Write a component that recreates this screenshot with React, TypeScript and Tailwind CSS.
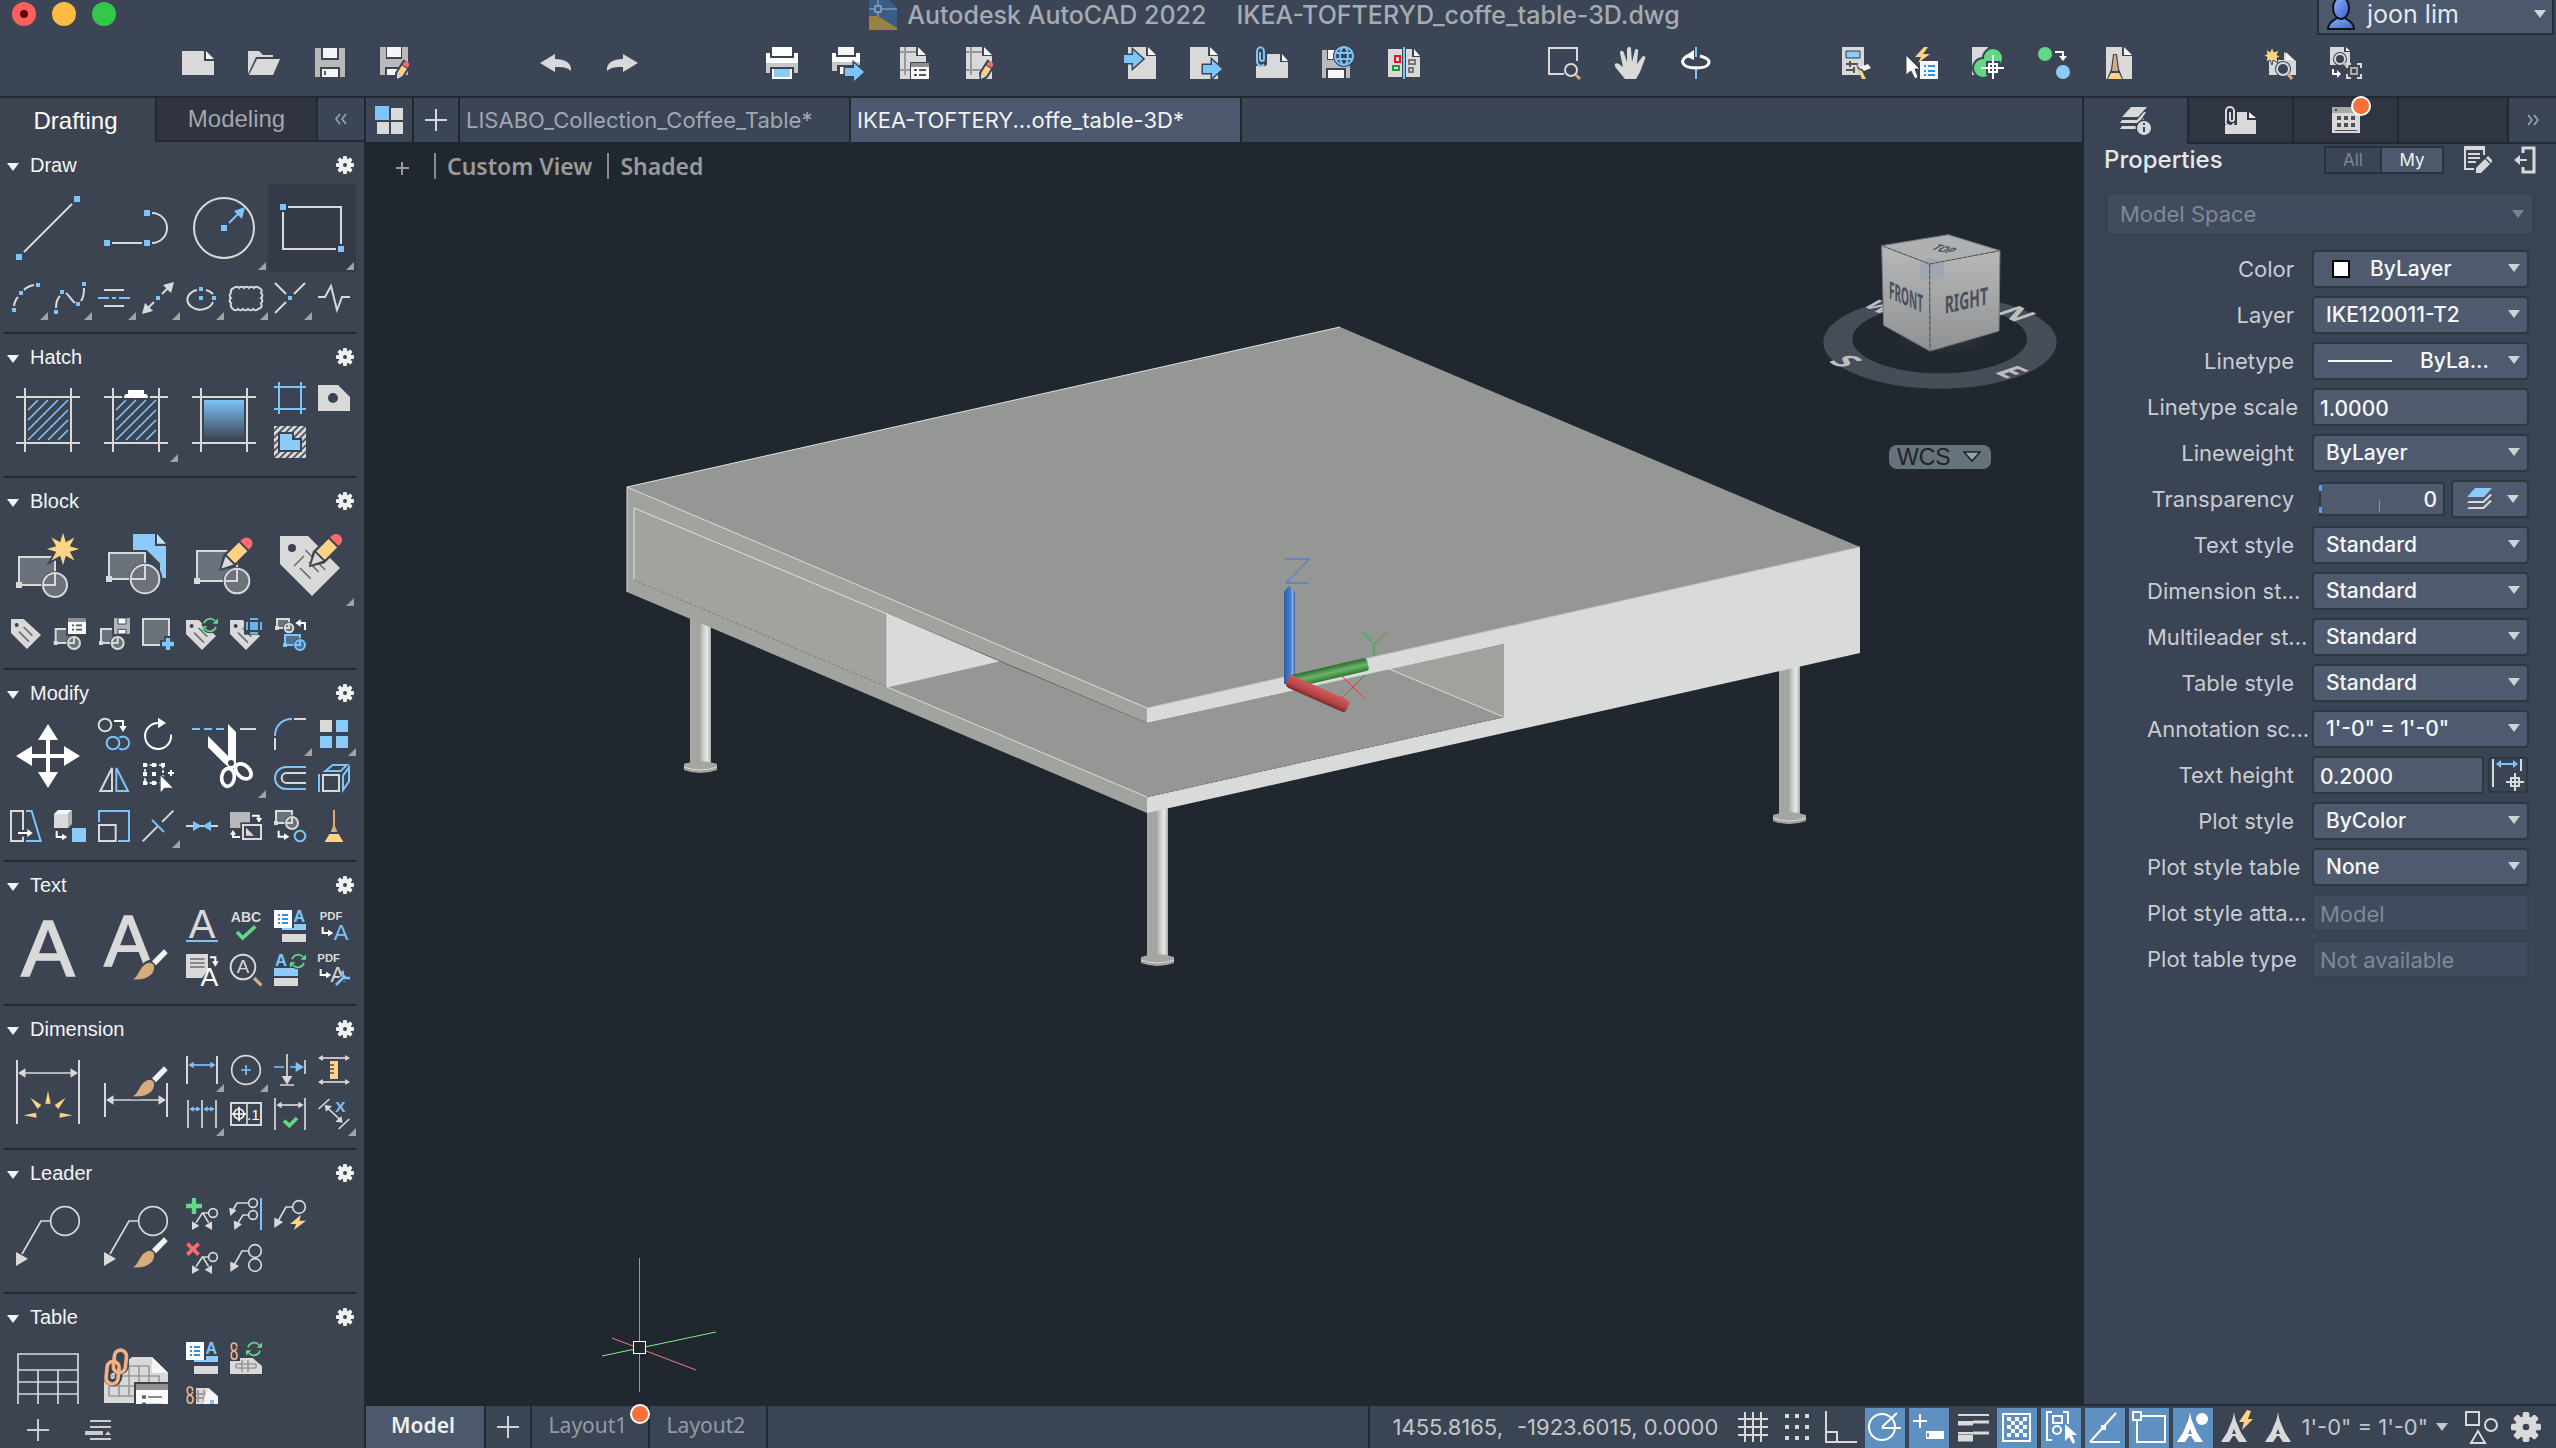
import React, { ReactNode } from "react";

const W = "#d9d9d9";
const B = "#7cc4fa";
const BF = "#8ccbf8";
const G = "#62d884";
const Y = "#fed384";
const R = "#fb6a6e";
const T = "#d9ab7c";
const P = "#3c4452";
const F = "#6c727c";
const O = "#f0b183";
const sans = "font-['Liberation_Sans',Arial,sans-serif]";

/* ---------- shared glyph parts ---------- */

function Gear({ className }: { className: string }) {
  return (
    <svg viewBox="-9 -9 18 18" className={className} aria-hidden="true">
      <g fill="currentColor">
        {[0, 45, 90, 135].map((a) => (
          <rect key={a} x="-2" y="-9" width="4" height="18" rx="1" transform={`rotate(${a})`} />
        ))}
      </g>
      <circle r="4.3" fill="none" stroke="currentColor" strokeWidth="4.4" />
      <circle r="2" fill={P} />
    </svg>
  );
}

function Caret({ className }: { className: string }) {
  return (
    <svg viewBox="0 0 12 8" className={className} aria-hidden="true">
      <path d="M0 0H12L6 8z" fill="currentColor" />
    </svg>
  );
}

function Svg({ box, children }: { box: string; children: ReactNode }) {
  return (
    <svg viewBox={box} className="block h-full w-full overflow-visible" fill="none" stroke={W} strokeWidth="6" aria-hidden="true">
      {children}
    </svg>
  );
}

function Glyph({ x, y, s, c = W, bold, children }: { x: number; y: number; s: number; c?: string; bold?: boolean; children: string }) {
  return (
    <text x={x} y={y} fontSize={s} fill={c} stroke="none" fontWeight={bold ? 700 : 400} fontFamily="Liberation Sans, Arial, sans-serif" textAnchor="middle">
      {children}
    </text>
  );
}

function Pencil({ x, y, k = 1 }: { x: number; y: number; k?: number }) {
  return (
    <g transform={`translate(${x} ${y}) rotate(-45) scale(${k})`} stroke="none">
      <path d="M-8 0L34 -25H112A25 25 0 0 1 112 25H34z" fill={P} />
      <path d="M2 0L36 -17V17z" fill={W} />
      <rect x="42" y="-18" width="52" height="36" fill={Y} />
      <path d="M100 -18H108A18 18 0 0 1 108 18H100z" fill={R} />
    </g>
  );
}

function Brush({ x, y }: { x: number; y: number }) {
  return (
    <g transform={`translate(${x} ${y})`} stroke="none">
      <path d="M-8 8C12 -4 18 -56 58 -60L92 -100L116 -80L72 -32C70 0 40 12 -8 8z" fill={P} />
      <path d="M0 0C22 -10 20 -46 52 -50Q66 -48 64 -32C60 -6 30 2 0 0z" fill={T} />
      <path d="M58 -54L94 -90L105 -78L70 -42z" fill="#f2f2f2" />
    </g>
  );
}

function BlockMark({ x, y, w, h, r, c = W, f = F }: { x: number; y: number; w: number; h: number; r: number; c?: string; f?: string }) {
  return (
    <g stroke={c}>
      <rect x={x} y={y} width={w} height={h} fill={f} />
      <circle cx={x + w} cy={y + h} r={r + 5} fill={P} stroke="none" />
      <circle cx={x + w} cy={y + h} r={r} fill={f} />
      <path d={`M${x + w - r} ${y + h}H${x + w}V${y + h - r}`} />
      <rect x={x - 6} y={y + h - 6} width="12" height="12" fill={c} stroke="none" />
    </g>
  );
}

function Refresh({ x, y }: { x: number; y: number }) {
  return (
    <g transform={`translate(${x} ${y})`}>
      <circle r="25" fill={P} stroke="none" />
      <path d="M-18 -5A19 19 0 0 1 15 -12M18 5A19 19 0 0 1 -15 12" stroke={G} strokeWidth="5" />
      <path d="M24 -20V-4H8zM-24 20V4H-8z" fill={G} stroke="none" />
    </g>
  );
}

function Turn({ x, y }: { x: number; y: number }) {
  return (
    <g transform={`translate(${x} ${y})`}>
      <path d="M2 0V18H20" stroke="#fff" />
      <path d="M18 8L34 18L18 28z" fill="#fff" stroke="none" />
    </g>
  );
}

function Drop({ x, y }: { x: number; y: number }) {
  return (
    <g transform={`translate(${x} ${y})`}>
      <path d="M0 0H16V16" stroke="#fff" />
      <path d="M6 12H26L16 28z" fill="#fff" stroke="none" />
    </g>
  );
}

function StyleSheetIcon() {
  return (
    <g stroke="none">
      <path d="M42 66h72v12H42z" fill={BF} />
      <path d="M78 60h36v18H78z" fill={BF} />
      <path d="M42 90h72v24H42z" fill={W} />
      <path d="M14 14h64v58H14z" fill={P} />
      <path d="M18 18h54v54H18z" fill="#fff" />
      <path d="M30 33h6M30 45h6M30 57h6M42 33h18M42 45h18M42 57h18" stroke="#2f8fe0" strokeWidth="6" />
      <Glyph x={94} y={53} s={48} c={B} bold>A</Glyph>
    </g>
  );
}

const tagPath = "M0 0H38L90 48L48 90L0 42z";
function MiniTag({ x, y }: { x: number; y: number }) {
  return (
    <g transform={`translate(${x} ${y})`}>
      <path d={tagPath} fill={W} stroke="none" />
      <circle cx="17" cy="18" r="6" fill={P} stroke="none" />
      <path d="M38 24L64 50M24 38L54 68" stroke="#6e6e6e" strokeWidth="5" />
    </g>
  );
}

/* ---------- left palette ---------- */

type ToolDef = { n: string; box: string; g: ReactNode; fly?: boolean; on?: boolean };

function Tool({ t, big }: { t: ToolDef; big?: boolean }) {
  return (
    <button
      type="button"
      aria-label={t.n}
      title={t.n}
      className={`relative block shrink-0 ${big ? "h-22 w-22" : "h-11 w-11"} ${t.on ? "bg-[#343a48]" : ""}`}
    >
      <Svg box={t.box}>{t.g}</Svg>
      {t.fly && (
        <svg viewBox="0 0 8 8" aria-hidden="true" className={`absolute h-2 w-2 ${big ? "right-0.5 bottom-0.5" : "right-0 bottom-0"}`}>
          <path d="M8 0V8H0z" fill="#a3a3a3" />
        </svg>
      )}
    </button>
  );
}

function Section({ title, children, row }: { title: string; children: ReactNode; row?: ToolDef[] }) {
  return (
    <section className="border-b-2 border-[#232931] pb-3">
      <div className="flex h-[42px] items-center justify-between pt-1 pr-0.5">
        <button type="button" className={`flex items-center gap-2 text-[20px] leading-6 text-[#f4f4f4] ${sans}`}>
          <Caret className="mt-1 h-2 w-[18px]" />
          <span>{title}</span>
        </button>
        <button type="button" aria-label={`${title} settings`} className="text-[#f2f2f2]">
          <Gear className="h-[18px] w-[18px]" />
        </button>
      </div>
      <div className="flex">{children}</div>
      {row && <div className="mt-1 flex">{row.map((t) => <Tool key={t.n} t={t} />)}</div>}
    </section>
  );
}

const quadCols = { 2: "grid-cols-2", 3: "grid-cols-3", 4: "grid-cols-4" };
function Quad({ tools, cols = 2 }: { tools: ToolDef[]; cols?: 2 | 3 | 4 }) {
  return (
    <div className={`grid content-start ${quadCols[cols]}`}>
      {tools.map((t) => <Tool key={t.n} t={t} />)}
    </div>
  );
}

const Sq = ({ x, y, s = 6 }: { x: number; y: number; s?: number }) => (
  <rect x={x - s / 2} y={y - s / 2} width={s} height={s} fill={B} stroke="none" />
);
const L2 = ({ d, c = W }: { d: string; c?: string }) => <path d={d} stroke={c} strokeWidth="2" />;

const drawBig: ToolDef[] = [
  { n: "Line", box: "4 184 88 88", g: <><L2 d="M24 252L72 204" /><Sq x={19} y={257} /><Sq x={77} y={199} /></> },
  { n: "Polyline", box: "92 184 88 88", g: <><L2 d="M112 243H142M152 213A15 15 0 0 1 152 243" /><Sq x={107} y={243} /><Sq x={147} y={243} /><Sq x={147} y={213} /></> },
  { n: "Circle", box: "180 184 88 88", fly: true, g: <><circle cx="224" cy="228" r="30" strokeWidth="2" /><L2 c={B} d="M229 223L239 213" /><path d="M245 207L242 219L234 211z" fill={B} stroke="none" /><Sq x={224} y={228} /></> },
  { n: "Rectangle", box: "268 184 88 88", fly: true, on: true, g: <><L2 d="M288 207H341V244M336 249H283V212" /><Sq x={283} y={207} /><Sq x={341} y={249} /></> },
];
const drawRow: ToolDef[] = [
  { n: "Arc", box: "4 276 44 44", fly: true, g: <><L2 d="M14 306Q15 300 18 297M24 290Q28 286 34 285" /><Sq x={14} y={310} s={4} /><Sq x={21} y={293} s={4} /><Sq x={38} y={285} s={4} /></> },
  { n: "Spline", box: "48 276 44 44", fly: true, g: <><L2 d="M56 308C56 303 58 298 60 296M66 293C69 295 71 300 75 303M81 301C84 297 84 292 84 288" /><Sq x={56} y={312} s={4} /><Sq x={62} y={292} s={4} /><Sq x={78} y={304} s={4} /><Sq x={84} y={284} s={4} /></> },
  { n: "Construction line", box: "92 276 44 44", fly: true, g: <><L2 d="M104 290H124M104 306H124" /><L2 c={B} d="M98 298H109M112 298H116M119 298H130" /></> },
  { n: "Ray", box: "136 276 44 44", fly: true, g: <><L2 d="M162 294L168 288M154 302L148 308" /><path d="M174 282L171 293L163 285zM142 314L145 303L153 311z" fill={W} stroke="none" /><Sq x={158} y={298} s={4} /></> },
  { n: "Ellipse", box: "180 276 44 44", fly: true, g: <><L2 d="M206 290A13 10 0 0 1 213 294M213 302A13 10 0 1 1 197 290" /><Sq x={201} y={289} s={4} /><Sq x={201} y={298} s={4} /><Sq x={214} y={298} s={4} /></> },
  { n: "Revision cloud", box: "224 276 44 44", fly: true, g: <L2 d="M234 288a3 3 0 0 1 5 0a3 3 0 0 1 5 0a3 3 0 0 1 5 0a3 3 0 0 1 5 0a3 3 0 0 1 5 0q4 1 2 5a3 3 0 0 1 0 5a3 3 0 0 1 0 5q2 5 -3 6a3 3 0 0 1 -5 0a3 3 0 0 1 -5 0a3 3 0 0 1 -5 0a3 3 0 0 1 -5 0a3 3 0 0 1 -5 0q-3 -2 -2 -6a3 3 0 0 1 0 -5a3 3 0 0 1 0 -5q-1 -4 3 -5" /> },
  { n: "Point", box: "268 276 44 44", fly: true, g: <><L2 d="M275 283L286 294M305 283L294 294M286 302L275 313" /><Sq x={290} y={298} s={4} /></> },
  { n: "Break line", box: "312 276 44 44", g: <L2 d="M318 297H325L331 286L337 310L342 297H350" /> },
];

const frame = (dx: number) => <path d={`M${75 + dx} 174V366M${213 + dx} 174V366M${48 + dx} 339H${240 + dx}`} />;
const diag = (dx: number) => (
  <path
    d={[324, 354, 384, 414, 444, 474, 504]
      .map((c) => {
        const x1 = Math.max(84, c - 330), x2 = Math.min(204, c - 210);
        return `M${x1 + dx} ${c - x1}L${x2 + dx} ${c - x2}`;
      })
      .join("")}
    stroke={B}
    strokeWidth="5"
  />
);
const hatchBig: ToolDef[] = [
  { n: "Hatch", box: "12 138 264 264", g: <>{frame(0)}<path d="M48 201H240" />{diag(0)}</> },
  { n: "Boundary", box: "276 138 264 264", fly: true, g: <>{frame(264)}<path d="M312 201H366M450 201H504" />{diag(264)}<path d="M384 180H432V192H438Q444 194 444 204H372Q372 194 378 192H384z" fill="#fff" stroke="none" /></> },
  {
    n: "Gradient", box: "540 138 264 264",
    g: <><defs><linearGradient id="gr" x1="0" y1="0" x2="0" y2="1"><stop offset="0" stopColor={B} /><stop offset="1" stopColor={P} /></linearGradient></defs>{frame(528)}<path d="M576 201H768" /><rect x="612" y="210" width="120" height="120" fill="url(#gr)" stroke="none" /></>,
  },
];
const hatchSmall: ToolDef[] = [
  { n: "Hatch boundary", box: "804 138 132 132", g: <path stroke={B} d="M837 156V252M903 156V252M822 171H918M822 237H918" /> },
  { n: "Wipeout", box: "936 138 132 132", g: <><path d="M954 165H1014L1050 201V243H954z" fill={W} stroke="none" /><circle cx="999" cy="204" r="15" fill={P} stroke="none" /></> },
  {
    n: "Region", box: "804 270 132 132",
    g: <><defs><pattern id="hp" width="14" height="14" patternUnits="userSpaceOnUse" patternTransform="rotate(45)"><rect width="6" height="14" fill={W} /></pattern></defs>
      <rect x="822" y="288" width="96" height="96" fill="url(#hp)" stroke="none" /><path d="M834 306H882V324H906V366H834z" fill={P} stroke="none" /><path d="M840 312H876V330H900V360H840z" fill={BF} stroke="none" /></>,
  },
];

const star = Array.from({ length: 16 }, (_, i) => {
  const r = i % 2 ? 22 : 49, a = (i * Math.PI) / 8;
  return `${189 + r * Math.sin(a)},${657 - r * Math.cos(a)}`;
}).join(" ");

const blockBig: ToolDef[] = [
  { n: "Create block", box: "12 570 264 264", g: <><BlockMark x={57} y={681} w={108} h={84} r={36} /><rect x="48" y="756" width="18" height="18" fill={W} stroke="none" /><polygon points={star} fill={Y} stroke={P} strokeWidth="12" /><polygon points={star} fill={Y} stroke="none" /></> },
  { n: "Insert block", box: "276 570 264 264", g: <><path d="M399 612H465V648H498V744H480V700L440 660H399z" fill={BF} stroke="none" /><path d="M471 612L498 641H471z" fill="#c3e4fb" stroke="none" /><rect x="321" y="660" width="120" height="84" fill={P} stroke="none" /><circle cx="435" cy="747" r="52" fill={P} stroke="none" /><BlockMark x={327} y={669} w={108} h={78} r={43} /><rect x="318" y="738" width="18" height="18" fill={W} stroke="none" /></> },
  { n: "Edit block", box: "540 570 264 264", g: <><BlockMark x={591} y={663} w={120} h={90} r={37} /><rect x="582" y="744" width="18" height="18" fill={W} stroke="none" /><Pencil x={663} y={717} /></> },
  { n: "Edit attribute", box: "804 570 264 264", fly: true, g: <><path d="M840 618H924L1020 714L936 798L840 702z" fill={W} stroke="none" /><circle cx="876" cy="654" r="12" fill={P} stroke="none" /><path d="M882 708L912 678M916 660L976 720M926 696L956 726M900 714L932 746" stroke="#6e6e6e" strokeWidth="5" /><Pencil x={932} y={706} /></> },
];
const blockRow: ToolDef[] = [
  { n: "Attribute", box: "12 846 132 132", g: <MiniTag x={33} y={867} /> },
  { n: "Block list", box: "144 846 132 132", g: <><BlockMark x={167} y={897} w={55} h={42} r={18} /><path d="M198 858H264V918H198z" fill={P} stroke="none" /><path d="M204 864H258V876H204z" fill="#8f8f8f" stroke="none" /><path d="M204 876H258V912H204z" fill="#f8f8f8" stroke="none" /><path d="M216 886H222M228 886H246M216 899H222M228 899H246" stroke="#555" strokeWidth="5" /></> },
  { n: "Write block", box: "276 846 132 132", g: <><BlockMark x={303} y={897} w={50} h={42} r={18} /><path d="M336 858H396V918H336z" fill={P} stroke="none" /><path d="M342 864H390V912H342z" fill="#b4b4b8" stroke="none" /><path d="M354 864H378V882H354zM354 898H378V912H354z" fill="#fff" stroke={P} strokeWidth="3" /></> },
  { n: "Base point", box: "408 846 132 132", g: <><rect x="429" y="867" width="78" height="78" fill={F} /><path d="M504 918V966M480 942H528" stroke={P} strokeWidth="24" /><path d="M504 924V960M486 942H522" stroke={B} strokeWidth="13" /></> },
  { n: "Sync attributes", box: "540 846 132 132", g: <><MiniTag x={558} y={870} /><Refresh x={630} y={885} /></> },
  { n: "Attribute display", box: "672 846 132 132", g: <><MiniTag x={690} y={870} /><rect x="732" y="858" width="60" height="56" fill={P} stroke="none" /><rect x="750" y="876" width="24" height="24" fill="#6db4e8" stroke="none" /><path d="M750 867H774M750 909H774M741 876V900M783 876V900" stroke="#6db4e8" /></> },
  { n: "Replace block", box: "804 846 132 132", g: <><BlockMark x={831} y={867} w={36} h={27} r={13} /><BlockMark x={855} y={915} w={45} h={30} r={15} c={B} f="#4d7294" /><path d="M915 900V879H900" stroke="#fff" /><path d="M886 879L902 868V890z" fill="#fff" stroke="none" /></> },
];

const moveTool: ToolDef = { n: "Move", box: "12 126 264 264", g: <><path d="M144 190V326M76 258H212" stroke="#fff" strokeWidth="12" /><path d="M144 162L174 210H114zM144 354L174 306H114zM48 258L96 228V288zM240 258L192 228V288z" fill="#fff" stroke="none" /></> };
const modA: ToolDef[] = [
  { n: "Copy", box: "276 126 132 132", g: <><circle cx="315" cy="165" r="19" /><path d="M342 153H369V170" stroke="#fff" /><path d="M358 168H380L369 186z" fill="#fff" stroke="none" /><circle cx="339" cy="219" r="19" stroke={B} /><path d="M358 203A19 19 0 1 1 358 235" stroke={B} /></> },
  { n: "Rotate", box: "408 126 132 132", g: <><path d="M474 159A39 39 0 1 0 513 194" stroke="#fff" /><path d="M474 143L498 159L474 175z" fill="#fff" stroke="none" /></> },
  { n: "Mirror", box: "276 258 132 132", g: <><path d="M301 363H336V294z" /><path d="M349 294V363H384z" stroke={B} /></> },
  { n: "Edit selection", box: "408 258 132 132", g: <><rect x="435" y="285" width="54" height="54" stroke="#fff" strokeDasharray="8 6" strokeWidth="5" /><path d="M429 279h12v12h-12zM456 279h12v12h-12zM483 279h12v12h-12zM429 306h12v12h-12zM456 306h12v12h-12zM429 333h12v12h-12zM456 333h12v12h-12z" fill="#fff" stroke="none" /><path d="M504 309H522M513 300V318" stroke="#fff" /><path d="M480 312V372L494 355H522z" fill="#fff" stroke={P} strokeWidth="4" /></> },
];
const trimTool: ToolDef = {
  n: "Trim", box: "540 126 264 264", fly: true,
  g: <><path d="M576 177H600M612 177H636M648 177H672" stroke={B} /><path d="M720 177H768" /><g stroke="#fff" strokeWidth="11"><ellipse cx="684" cy="322" rx="19" ry="27" transform="rotate(6 684 322)" /><ellipse cx="730" cy="304" rx="18" ry="27" transform="rotate(-48 730 304)" /></g><path d="M624 198L690 264H708V290L694 298L672 280L624 232zM684 162L708 186V280H684z" fill="#fff" stroke="none" /><circle cx="693" cy="279" r="9" fill={P} stroke="none" /></>,
};
const modB: ToolDef[] = [
  { n: "Fillet", box: "804 126 132 132", fly: true, g: <><path d="M825 198C825 168 846 147 876 147" stroke={B} /><path d="M882 147H918M825 204V240" /></> },
  { n: "Array", box: "936 126 132 132", fly: true, g: <g stroke="none" fill={BF}><path d="M960 150h36v36h-36z" fill={W} /><path d="M1008 150h36v36h-36zM960 198h36v36h-36zM1008 198h36v36h-36z" /></g> },
  { n: "Offset", box: "804 258 132 132", g: <><path d="M918 291H858A33 33 0 0 0 858 357H918" stroke={B} /><path d="M918 309H860A15 15 0 0 0 860 339H918" /></> },
  { n: "Solid edit", box: "936 258 132 132", g: <><rect x="969" y="315" width="48" height="48" /><path d="M957 312V366M976 303L998 285H1041L1022 303zM1029 317L1047 292V334L1029 360z" stroke={B} /></> },
];
const modifyRow: ToolDef[] = [
  { n: "Stretch", box: "12 402 132 132", g: <><path d="M69 480V423H33V513H69V500" /><path d="M78 423H95L122 513H78" stroke={B} /><path d="M54 489H84" stroke="#fff" /><path d="M82 477L98 489L82 501z" fill="#fff" stroke="none" /></> },
  { n: "3D move", box: "144 402 132 132", g: <><g stroke="none"><path d="M162 432L174 420H216L204 432z" fill="#f5f5f5" /><path d="M162 432H204V474H162z" fill={W} /><path d="M204 432L216 420V462L204 474z" fill="#b0b0b0" /><path d="M216 474H258V516H216z" fill={BF} /></g><Turn x={168} y={483} /></> },
  { n: "Scale", box: "276 402 132 132", g: <><path d="M297 456V423H387V513H354" stroke={B} /><rect x="297" y="465" width="50" height="48" /></> },
  { n: "Break", box: "408 402 132 132", fly: true, g: <><path d="M428 514L520 422" /><path d="M468 452L486 470" stroke={P} strokeWidth="20" /><path d="M456 450L492 486" stroke={B} /></> },
  { n: "Join", box: "540 402 132 132", g: <><path d="M558 468H654" /><path d="M579 453L605 468L579 483zM633 453L607 468L633 483z" fill={B} stroke="none" /></> },
  { n: "Draw order", box: "672 402 132 132", g: <><path d="M690 426H750V474H690z" fill="#b8b8b8" stroke="none" /><path d="M756 437H776V446" stroke="#fff" /><path d="M768 444H786L777 458z" fill="#fff" stroke="none" /><rect x="729" y="465" width="54" height="42" fill={P} stroke={P} strokeWidth="16" /><rect x="729" y="465" width="54" height="42" /><path d="M738 473L762 497H738z" fill={W} stroke="none" /><path d="M720 501H699V492" stroke="#fff" /><path d="M690 494H708L699 480z" fill="#fff" stroke="none" /></> },
  { n: "Extract", box: "804 402 132 132", g: <><BlockMark x={828} y={423} w={48} h={36} r={18} /><Turn x={834} y={482} /><circle cx="900" cy="498" r="16" stroke={B} /></> },
  { n: "Purge", box: "936 402 132 132", g: <g stroke="none"><path d="M999 420H1005V468L1012 486H992L999 468z" fill={T} /><path d="M988 492H1016L1030 516H974z" fill={Y} /></g> },
];

const Check = ({ d }: { d: string }) => <path d={d} stroke={G} strokeWidth="11" />;
const textBig: ToolDef[] = [
  { n: "Multiline text", box: "12 702 264 264", g: <text x="144" y="918" fontSize="240" fill={W} stroke={W} strokeWidth="5" textAnchor="middle" fontFamily="Liberation Sans, Arial, sans-serif">A</text> },
  { n: "Text style", box: "276 702 264 264", g: <><text x="384" y="888" fontSize="214" fill={W} stroke={W} strokeWidth="5" textAnchor="middle" fontFamily="Liberation Sans, Arial, sans-serif">A</text><Brush x={398} y={928} /></> },
];
const textSmall: ToolDef[] = [
  { n: "Single line text", box: "540 702 132 132", g: <><Glyph x={606} y={804} s={120}>A</Glyph><path d="M558 813H654" stroke={B} /></> },
  { n: "Spelling", box: "672 702 132 132", g: <><Glyph x={738} y={756} s={42} bold>ABC</Glyph><Check d="M711 786L728 804L766 769" /></> },
  { n: "Annotation style", box: "804 702 132 132", g: <g transform="translate(804 702)"><StyleSheetIcon /></g> },
  { n: "PDF text", box: "936 702 132 132", g: <><Glyph x={993} y={750} s={34} bold>PDF</Glyph><Turn x={966} y={771} /><Glyph x={1023} y={810} s={66} c={B}>A</Glyph></> },
  { n: "Text from list", box: "540 834 132 132", g: <><path d="M558 852H624V900L606 924H558z" fill={W} stroke="none" /><path d="M570 867H614M570 879H614M570 891H614" stroke="#6e6e6e" strokeWidth="5" /><Drop x={630} y={862} /><Glyph x={628} y={948} s={80} c="#fff">A</Glyph></> },
  { n: "Find text", box: "672 834 132 132", g: <><circle cx="729" cy="891" r="37" /><Glyph x={729} y={908} s={56}>A</Glyph><path d="M762 924L784 946" stroke={T} strokeWidth="10" /></> },
  { n: "Update text", box: "804 834 132 132", g: <><Glyph x={843} y={888} s={50} c={B} bold>A</Glyph><path d="M822 894H894V918H822z" fill={BF} stroke="none" /><path d="M822 924H894V948H822z" fill={W} stroke="none" /><Refresh x={894} y={873} /></> },
  { n: "PDF settings", box: "936 834 132 132", g: <><Glyph x={986} y={876} s={34} bold>PDF</Glyph><Turn x={960} y={897} /><Glyph x={1013} y={936} s={64}>A</Glyph><path d="M1008 945L1036 917" stroke={P} strokeWidth="18" /><path d="M1008 945L1036 917" stroke={B} strokeWidth="8" /><path d="M1028 902V918L1034 924H1050" stroke={B} strokeWidth="8" /></> },
];

const arrowsH = (x1: number, x2: number, y: number, c = W, h = 10) => (
  <g>
    <path d={`M${x1 + h} ${y}H${x2 - h}`} stroke={c} strokeWidth="5" />
    <path d={`M${x1} ${y}L${x1 + h * 1.6} ${y - h}V${y + h}zM${x2} ${y}L${x2 - h * 1.6} ${y - h}V${y + h}z`} fill={c} stroke="none" />
  </g>
);
const dimBig: ToolDef[] = [
  { n: "Dimension", box: "12 144 264 264", g: <><path d="M51 180V372M237 180V372" />{arrowsH(54, 234, 219, W, 14)}<path d="M144 272L152 311H136zM91 293L124 315L113 327zM197 293L164 315L175 327zM71 346L108 338L110 353zM217 346L180 338L178 353z" fill={Y} stroke="none" /></> },
  { n: "Dimension style", box: "276 144 264 264", g: <><path d="M315 249V351M501 249V351" />{arrowsH(318, 498, 300, W, 14)}<Brush x={398} y={289} /></> },
];
const dimSmall: ToolDef[] = [
  { n: "Linear", box: "540 144 132 132", fly: true, g: <><path d="M561 168V252M651 168V252" />{arrowsH(565, 647, 195, B)}</> },
  { n: "Center mark", box: "672 144 132 132", fly: true, g: <><circle cx="738" cy="210" r="43" strokeWidth="5" /><path d="M723 210H753M738 195V225" stroke={B} strokeWidth="5" /></> },
  { n: "Ordinate", box: "804 144 132 132", g: <><path d="M861 162V232M840 255H882M915 180V222" strokeWidth="5" /><path d="M845 228H877L861 254z" fill={W} stroke="none" /><path d="M822 201H852M870 201H890" stroke={B} strokeWidth="5" /><path d="M887 186L912 201L887 216z" fill={B} stroke="none" /></> },
  { n: "Spacing", box: "936 144 132 132", g: <>{arrowsH(954, 1050, 174, W, 9)}{arrowsH(954, 1050, 246, W, 9)}<path d="M990 183H1014V237H990z" fill={Y} stroke="none" /><path d="M990 195H1002M990 207H1002M990 219H1002" stroke="#555" strokeWidth="4" /></> },
  { n: "Continue", box: "540 276 132 132", fly: true, g: <><path d="M564 300V384M606 300V384M648 300V384" strokeWidth="5" />{arrowsH(568, 602, 327, B, 8)}{arrowsH(610, 644, 327, B, 8)}</> },
  { n: "Tolerance", box: "672 276 132 132", g: <><rect x="693" y="309" width="90" height="66" /><path d="M741 309V375" strokeWidth="5" /><circle cx="717" cy="342" r="15" stroke="#fff" strokeWidth="5" /><path d="M696 342H738M717 320V364" stroke="#fff" strokeWidth="5" /><Glyph x={760} y={360} s={46} c="#fff">.1</Glyph></> },
  { n: "Inspect", box: "804 276 132 132", g: <><path d="M825 294V390M915 294V390" strokeWidth="5" />{arrowsH(829, 911, 315)}<Check d="M852 362L868 377L891 354" /></> },
  { n: "Oblique", box: "936 276 132 132", fly: true, g: <><path d="M956 327L988 297M1016 387L1048 357M984 325L1018 357" strokeWidth="5" /><path d="M974 315L996 318L978 335zM1028 368L1006 365L1024 348z" fill={W} stroke="none" /><Glyph x={1021} y={336} s={46} c={B} bold>X</Glyph></> },
];

const arrowhead = (x: number, y: number, a: number, k = 1) => (
  <path d="M0 0L-15 -28H15z" transform={`translate(${x} ${y}) rotate(${a}) scale(${k})`} fill={W} stroke="none" />
);
const leaderBig: ToolDef[] = [
  { n: "Multileader", box: "12 576 264 264", g: <><circle cx="195" cy="663" r="43" strokeWidth="5" /><path d="M150 663H123L66 762" strokeWidth="5" /><path d="M48 756V798L84 776z" fill={W} stroke="none" /></> },
  { n: "Multileader style", box: "276 576 264 264", g: <><circle cx="459" cy="663" r="43" strokeWidth="5" /><path d="M414 663H387L330 762" strokeWidth="5" /><path d="M312 756V798L348 776z" fill={W} stroke="none" /><Brush x={398} y={802} /></> },
];
const forkLeader = (dy: number) => (
  <g transform={`translate(0 ${dy})`}>
    <circle cx="639" cy="639" r="13" strokeWidth="5" />
    <path d="M626 639H607L588 668M609 640L626 668" strokeWidth="5" />
    <path d="M576 664V690L598 677zM636 664V690L614 677z" fill={W} stroke="none" />
  </g>
);
const leaderSmall: ToolDef[] = [
  { n: "Add leader", box: "540 576 132 132", g: <><path d="M582 594V642M558 618H606" stroke={G} strokeWidth="13" />{forkLeader(0)}</> },
  { n: "Align leaders", box: "672 576 132 132", g: <><circle cx="759" cy="609" r="13" strokeWidth="5" /><circle cx="759" cy="645" r="13" strokeWidth="5" /><path d="M746 609H711L699 630M746 645H729L713 670" strokeWidth="5" />{arrowhead(691, 648, 20, 0.8)}{arrowhead(703, 690, 25, 0.9)}<path d="M783 594V690" stroke={B} /></> },
  { n: "Quick leader", box: "804 576 132 132", g: <><circle cx="897" cy="621" r="19" strokeWidth="5" /><path d="M877 621H858L836 660" strokeWidth="5" />{arrowhead(823, 684, 28)}<path d="M903 644L870 672H888L882 690L918 662H898z" fill={Y} stroke="none" /></> },
  { n: "Remove leader", box: "540 708 132 132", g: <><path d="M562 731L596 764M596 731L562 764" stroke={R} strokeWidth="11" />{forkLeader(132)}</> },
  { n: "Collect leaders", box: "672 708 132 132", g: <><circle cx="765" cy="753" r="19" strokeWidth="5" /><circle cx="765" cy="795" r="19" strokeWidth="5" /><path d="M745 753H726L703 794" strokeWidth="5" />{arrowhead(691, 816, 28)}</> },
];

const Link = ({ k, x, y }: { k: number; x: number; y: number }) => (
  <g transform={`translate(${x} ${y}) scale(${k})`} fill="none" strokeLinecap="round">
    <g stroke={P} strokeWidth="22"><rect x="0" y="34" width="36" height="64" rx="18" /><rect x="20" y="0" width="36" height="64" rx="18" /></g>
    <g stroke={O} strokeWidth="11"><rect x="0" y="34" width="36" height="68" rx="18" transform="rotate(6 18 66)" /><rect x="22" y="0" width="36" height="68" rx="18" transform="rotate(6 38 32)" /></g>
  </g>
);
const tableBig: ToolDef[] = [
  { n: "Table", box: "12 1008 264 264", g: <path strokeWidth="5" d="M54 1230V1062H234V1230M54 1110H234M54 1146H234M54 1182H234M114 1110V1230M174 1110V1230" /> },
  { n: "Data link", box: "276 1008 264 264", g: <><path d="M312 1140V1209H504V1118L456 1071H396z" fill={W} stroke="none" /><path d="M456 1071L504 1118H456z" fill="#f5f5f5" stroke="none" /><path d="M327 1128H480M327 1158H480M327 1188H480M357 1128V1188M387 1098V1188M417 1098V1158M447 1098V1158M387 1098H447M327 1158V1188M477 1128V1158" stroke="#9a9a9a" strokeWidth="5" /><path d="M402 1146H510V1230H402z" fill={P} stroke="none" /><path d="M408 1152H504V1170H408z" fill="#8f8f8f" stroke="none" /><path d="M408 1170H504V1230H408z" fill="#fafafa" stroke="none" /><path d="M426 1191H438M426 1213H438" stroke="#666" strokeWidth="11" /><path d="M444 1191H486M444 1213H486" stroke="#666" strokeWidth="4" /><Link k={1} x={320} y={1050} /></> },
];
const sheet = (x: number, y: number) => (
  <g transform={`translate(${x} ${y})`}>
    <path d="M0 24H68L96 48V72H0z" fill={W} stroke="none" />
    <path d="M18 42H78M18 54H78M36 30V66M54 30V66M18 42V54M78 42V54" stroke="#9a9a9a" strokeWidth="5" />
  </g>
);
const SmallLink = ({ x, y }: { x: number; y: number }) => (
  <g transform={`translate(${x} ${y})`}>
    <path d="M-4 -4H30V56H-4z" fill={P} stroke="none" />
    <path d="M20 14V10A8 8 0 0 0 4 10V16Q4 22 12 26Q21 30 21 37V42A8 8 0 0 1 4 42V34Q4 28 12 26Q20 22 20 16" stroke={O} strokeWidth="5" />
  </g>
);
const tableSmall: ToolDef[] = [
  { n: "Table style", box: "540 1008 132 132", g: <g transform="translate(540 1008)"><StyleSheetIcon /></g> },
  { n: "Update data link", box: "672 1008 132 132", g: <>{sheet(690, 1050)}<SmallLink x={690} y={1027} /><Refresh x={762} y={1047} /></> },
  { n: "Extract data", box: "540 1140 132 132", g: <>{sheet(558, 1140)}<path d="M576 1182H618M576 1194H618M594 1170V1206" stroke="#9a9a9a" strokeWidth="5" /><path d="M624 1164L654 1192V1230H612V1194z" fill="#f5f5f5" stroke="none" /><path d="M630 1200H642V1230H630z" fill={B} stroke="none" /><SmallLink x={558} y={1159} /></> },
];

function ToolPalette() {
  return (
    <aside className="flex w-[366px] shrink-0 flex-col border-r-2 border-[#232931] bg-[#3c4452]" aria-label="Tool palette">
      <div className={`flex h-11 text-[24px] ${sans}`} role="tablist">
        <button type="button" role="tab" aria-selected="true" className="w-[155px] pt-0.5 pr-1 text-white">Drafting</button>
        <button type="button" role="tab" aria-selected="false" className="w-[163px] border-x-2 border-b-2 border-[#232931] bg-[#2f343f] text-[#a3a6ab]">Modeling</button>
        <button type="button" aria-label="Collapse palette" className="flex flex-1 items-center justify-center border-b-2 border-[#232931] bg-[#3b4555]">
          <svg viewBox="0 0 14 12" className="h-3 w-3.5" fill="none" stroke="#a3a9b2" strokeWidth="1.5"><path d="M6 1L2 6L6 11M12 1L8 6L12 11" /></svg>
        </button>
      </div>
      <div className="h-0 grow overflow-hidden pr-2 pl-1">
        <Section title="Draw" row={drawRow}>{drawBig.map((t) => <Tool key={t.n} t={t} big />)}</Section>
        <Section title="Hatch">{hatchBig.map((t) => <Tool key={t.n} t={t} big />)}<Quad tools={hatchSmall} /></Section>
        <Section title="Block" row={blockRow}>{blockBig.map((t) => <Tool key={t.n} t={t} big />)}</Section>
        <Section title="Modify" row={modifyRow}><Tool t={moveTool} big /><Quad tools={modA} /><Tool t={trimTool} big /><Quad tools={modB} /></Section>
        <Section title="Text">{textBig.map((t) => <Tool key={t.n} t={t} big />)}<Quad cols={4} tools={textSmall} /></Section>
        <Section title="Dimension">{dimBig.map((t) => <Tool key={t.n} t={t} big />)}<Quad cols={4} tools={dimSmall} /></Section>
        <Section title="Leader">{leaderBig.map((t) => <Tool key={t.n} t={t} big />)}<Quad cols={3} tools={leaderSmall} /></Section>
        <Section title="Table">{tableBig.map((t) => <Tool key={t.n} t={t} big />)}<Quad tools={tableSmall} /></Section>
      </div>
      <div className="flex h-11 shrink-0 items-start gap-9 pt-[15px] pl-[27px]">
        <button type="button" aria-label="Add palette group"><svg viewBox="0 0 22 22" className="h-[22px] w-[22px]" stroke="#c9ccd0" strokeWidth="2"><path d="M11 0V22M0 11H22" /></svg></button>
        <button type="button" aria-label="Customize palette"><svg viewBox="0 0 26 22" className="h-[22px] w-[26px]" fill="none" stroke="#c9ccd0" strokeWidth="2"><path d="M5 2H26M5 8H26M5 20H26" /><path d="M0 14H18" strokeWidth="4" /><path d="M20 16L23 12L26 16z" fill="#c9ccd0" stroke="none" /></svg></button>
      </div>
    </aside>
  );
}

/* ---------- top toolbar ---------- */

const bg = "#3b4555";
const doc = "M2 0H18V9H28V32H2z";
const Fold = () => <path d="M20 0L28 8H20z" fill="#f5f5f5" />;
const ArrowR = ({ x, y }: { x: number; y: number }) => (
  <g transform={`translate(${x} ${y})`}>
    <path d="M0 5H9V0L19 9L9 18V13H0z" fill={bg} stroke={bg} strokeWidth="3" />
    <path d="M0 5H9V0L19 9L9 18V13H0z" fill={B} />
  </g>
);
const MiniPencil = () => (
  <g transform="translate(17 32) rotate(-58)">
    <path d="M-2 0L4 -5H20V5H4z" fill={bg} /><path d="M0 0L5 -3V3z" fill={W} /><path d="M5 -3H14V3H5z" fill={Y} /><path d="M15 -3H17A3 3 0 0 1 17 3H15z" fill={R} />
  </g>
);
const GridLines = () => <path d="M2 5H18M2 23H20M7 0V28" stroke="#9a9a9a" strokeWidth="2" fill="none" />;

const toolbar: { n: string; g: ReactNode }[][] = [
  [
    { n: "New", g: <><path d="M0 4H22V14H32V28H0z" fill={W} /><path d="M24 4L32 12H24z" fill="#f5f5f5" /></> },
    { n: "Open", g: <><path d="M0 27V4H11L15 8H25V10H8z" fill={W} /><path d="M9 12H32L25 28H1z" fill={W} /></> },
    { n: "Save", g: <><path d="M1 1H31V30H1z" fill="#b9b9b9" /><path d="M7 0H25V13H7zM6 20H26V31H6z" fill={bg} /><path d="M9 1H23V11H9zM8 22H24V30H8z" fill="#f5f5f5" /><path d="M10 24H12V28H10z" fill="#555c68" /></> },
    { n: "Save as", g: <><path d="M0 0H28V28H0z" fill="#b9b9b9" /><path d="M6 0H22V12H6zM5 20H22V29H5z" fill={bg} /><path d="M7 0H21V10H7zM7 22H18V28H7z" fill="#f5f5f5" /><MiniPencil /></> },
  ],
  [
    { n: "Undo", g: <path d="M0 16L15 7V12C25 12 32 16 31 24C27 20 22 20 15 20V25z" fill={W} /> },
    { n: "Redo", g: <path d="M32 16L17 7V12C7 12 0 16 1 24C5 20 10 20 17 20V25z" fill={W} /> },
  ],
  [
    { n: "Plot", g: <><path d="M0 6H32V16H0z" fill="#fff" /><path d="M0 16H32V26H0z" fill="#c8c8c8" /><path d="M4 0H28V11H4zM4 20H28V27H4z" fill={bg} /><path d="M6 0H26V9H6z" fill="#fff" /><path d="M6 22H26V32H6z" fill="#fff" /><path d="M8 22H24V30H8z" fill={BF} /></> },
    { n: "Batch plot", g: <><path d="M0 6H28V15H0z" fill="#fff" /><path d="M0 15H28V24H0z" fill="#c8c8c8" /><path d="M4 0H24V10H4zM5 18H28V27H5z" fill={bg} /><path d="M6 0H22V8H6zM8 20H20V27H8z" fill="#f5f5f5" /><ArrowR x={13} y={16} /></> },
    { n: "Page setup", g: <><path d={doc} fill={W} /><Fold /><GridLines /><path d="M12 15H32V32H12z" fill={bg} /><path d="M13 16H31V20H13z" fill="#8f8f8f" /><path d="M13 20H31V32H13z" fill="#f8f8f8" /><path d="M16 23H19M21 23H28M16 28H19M21 28H28" stroke="#555" strokeWidth="2" /></> },
    { n: "Edit layout", g: <><path d={doc} fill={W} /><Fold /><GridLines /><MiniPencil /></> },
  ],
  [
    { n: "Import", g: <><path d="M4 0H22V9H32V32H4z" fill={W} /><path d="M24 0L32 8H24z" fill="#f5f5f5" /><ArrowR x={0} y={3} /></> },
    { n: "Export", g: <><path d="M0 0H18V9H28V32H0z" fill={W} /><Fold /><ArrowR x={13} y={13} /></> },
    { n: "Attach", g: <><path d="M0 19H10V7H24V15H32V31H0z" fill={W} /><path d="M26 7L32 14H26z" fill="#f5f5f5" /><path d="M0 0H11V18H0z" fill={bg} /><path d="M4 5V12A2 2 0 0 0 8 12V5A3 4 0 0 0 1 5V13A4 5 0 0 0 8 17" stroke={B} strokeWidth="2" fill="none" /></> },
    { n: "Save to web", g: <><path d="M0 3H28V31H0z" fill="#b9b9b9" /><path d="M5 3H14V13H5zM4 21H24V31H4z" fill={bg} /><path d="M6 3H13V12H6zM6 23H22V31H6z" fill="#f5f5f5" /><circle cx="22" cy="9" r="11" fill={bg} /><g fill="none" stroke={B} strokeWidth="2"><circle cx="22" cy="9" r="9" /><ellipse cx="22" cy="9" rx="4" ry="9" /><path d="M13 6H31M13 12H31" /></g></> },
    { n: "Compare", g: <><path d="M0 2H14V30H0zM18 2H24V10H32V30H18z" fill={W} /><path d="M26 2L32 9H26z" fill="#f5f5f5" /><path d="M16 0V32" stroke={B} strokeWidth="2" /><g fill="none" strokeWidth="2"><rect x="7" y="9" width="5" height="6" stroke="#e81123" /><rect x="5" y="19" width="6" height="4" stroke="#1ba02d" /><rect x="21" y="13" width="6" height="4" stroke="#777" /><rect x="21" y="21" width="4" height="4" stroke="#777" /></g></> },
  ],
  [
    { n: "Zoom", g: <><path d="M16 27H1V1H29V14" stroke={W} strokeWidth="2" fill="none" /><circle cx="23" cy="23" r="6" stroke={W} strokeWidth="2" fill="none" /><path d="M28 28L32 32" stroke={T} strokeWidth="3" /></> },
    { n: "Pan", g: <path d="M11 32L2 21C-1 17 2 15 5 17L9 20L6 6C6 3 9 3 10 6L13 15L13 2C14 -1 17 -1 17 2L18 15L21 3C22 1 25 2 24 5L23 17L28 10C30 8 32 9 31 12L26 25L22 32z" fill={W} /> },
    { n: "Orbit", g: <><path d="M16 0V10M16 19V32" stroke={B} strokeWidth="2" /><path d="M10 8C-2 12 1 21 16 21C31 21 34 12 20 9" stroke="#fff" strokeWidth="3" fill="none" /><path d="M14 3V13L5 9z" fill="#fff" /></> },
  ],
  [
    { n: "Properties", g: <><path d="M2 0H24V28H2z" fill={W} /><path d="M6 4H20V11H6z" fill={BF} stroke="#333a46" strokeWidth="1" /><path d="M6 17H18M6 23H14M10 14V20M14 20V26" stroke="#555" strokeWidth="2" /><path d="M16 17L20 22L30 18V24L26 32H22z" fill={bg} /><path d="M18 22L22 24L26 32H22z" fill={Y} /><path d="M20 20L28 17L31 21L24 24z" fill="#f5f5f5" /></> },
    { n: "Quick select", g: <><path d="M18 0L9 10H15L12 16L24 7H17L22 0z" fill={Y} /><path d="M14 14H32V32H14z" fill="#f8f8f8" /><path d="M18 19H20M22 19H29M18 24H20M22 24H29M18 28H20M22 28H29" stroke="#2f8fe0" strokeWidth="2" /><path d="M0 8V28L5 24L9 32L12 30L9 22H14z" fill="#fff" stroke={bg} strokeWidth="1" /></> },
    { n: "Object snap", g: <><path d="M0 0H16L12 28H0z" fill={W} /><circle cx="11" cy="21" r="11" fill={bg} /><circle cx="21" cy="11" r="11" fill={bg} /><circle cx="21" cy="11" r="9" fill={G} /><circle cx="11" cy="21" r="9" fill={G} /><rect x="14" y="14" width="14" height="14" fill={bg} /><path d="M21 8V32M9 21H32" stroke="#fff" strokeWidth="2" /><rect x="17" y="17" width="8" height="8" stroke="#fff" strokeWidth="2" fill="none" /></> },
    { n: "Match properties", g: <><circle cx="7" cy="7" r="7" fill={G} /><circle cx="25" cy="25" r="7" fill={BF} /><path d="M17 5H25V10" stroke="#fff" strokeWidth="2" fill="none" /><path d="M21 9H29L25 14z" fill="#fff" /></> },
    { n: "Purge", g: <><path d={doc} fill={W} /><Fold /><path d="M9 7H13L15 22L19 32H3L7 22z" fill={bg} /><path d="M10 8H12L14 24H8z" fill={T} /><path d="M7 26H15L18 32H4z" fill={Y} /></> },
  ],
  [
    { n: "Find", g: <><path d="M5 13H20V5L32 14V28H5z" fill={W} /><path d="M22 5L30 13H22z" fill="#f5f5f5" /><polygon points="8,0 10,5 15,3 13,8 17,9 13,11 14,16 9,13 8,18 6,13 2,15 3,10 -1,9 3,7 2,2 6,5" fill={Y} stroke={bg} strokeWidth="1" /><circle cx="19" cy="22" r="8" fill={bg} /><circle cx="19" cy="22" r="6" fill={bg} stroke={W} strokeWidth="2" /><path d="M24 27L28 32" stroke={T} strokeWidth="3" /></> },
    { n: "Find in area", g: <><path d="M0 0H14V5H20V18H0z" fill={W} /><path d="M16 0L20 4H16z" fill="#f5f5f5" /><circle cx="10" cy="12" r="7" fill={bg} /><circle cx="10" cy="12" r="5" stroke={W} strokeWidth="2" fill="none" /><path d="M14 16L18 20" stroke={T} strokeWidth="3" /><path d="M3 22V27H8" stroke="#fff" strokeWidth="2" fill="none" /><path d="M7 23L11 27L7 31z" fill="#fff" /><path d="M17 21V17H21M27 17H31V21M31 27V31H27M21 31H17V27" stroke={W} strokeWidth="2" fill="none" /><rect x="21" y="21" width="6" height="6" stroke="#aaa" strokeWidth="2" fill="none" /></> },
  ],
];

function TopBar() {
  return (
    <header className="flex h-[98px] shrink-0 flex-col border-b-2 border-[#232931] bg-[#3b4555]">
      <div className="flex h-[34px] items-start justify-between">
        <div className="flex w-[104px] items-center gap-4 pt-0.5 pl-3">
          <button type="button" aria-label="Close" className="flex h-6 w-6 shrink-0 items-center justify-center rounded-full bg-[#fc605c]"><span className="h-2 w-2 rounded-full bg-[#5c0000]" /></button>
          <button type="button" aria-label="Minimize" className="h-6 w-6 shrink-0 rounded-full bg-[#fdbc40]" />
          <button type="button" aria-label="Zoom window" className="h-6 w-6 shrink-0 rounded-full bg-[#34c84a]" />
        </div>
        <h1 className="flex items-start gap-[30px] pl-32 text-[25px] leading-[30px] font-medium text-[#a6abb2]">
          <span className="flex items-start gap-2.5">
            <svg viewBox="0 0 28 30" className="h-[30px] w-7" aria-hidden="true">
              <path d="M0 0H20L28 7V30H0z" fill="#3a5d86" />
              <path d="M20 0L28 6V0z" fill={bg} />
              <path d="M0 16H9L28 28V30H0z" fill="#9a8240" />
              <path d="M0 9H6M12 9H28M9 0V6M9 12V16" stroke="#9fb4cc" strokeWidth="1" /><rect x="6" y="6" width="6" height="6" fill="none" stroke="#b9c6d6" strokeWidth="1" />
            </svg>
            Autodesk AutoCAD 2022
          </span>
          <span>IKEA-TOFTERYD_coffe_table-3D.dwg</span>
        </h1>
        <button type="button" className="mr-0.5 flex h-[35px] w-[237px] items-start gap-3 border-x-2 border-b-2 border-[#272d39] bg-[#4c586c] pl-2 text-[25px] leading-7 text-[#e6e8eb]">
          <svg viewBox="0 0 28 30" className="h-[30px] w-7" aria-hidden="true">
            <defs><linearGradient id="usr" x1="0" y1="0" x2="1" y2="1"><stop offset="0" stopColor="#8fb2ff" /><stop offset="1" stopColor="#3a62c8" /></linearGradient></defs>
            <path d="M1 29C1 22 7 20 10 18L18 18C21 20 27 22 27 29z" fill="url(#usr)" stroke="#10131a" strokeWidth="2" />
            <ellipse cx="14" cy="8" rx="8" ry="11" fill="url(#usr)" stroke="#10131a" strokeWidth="2" />
          </svg>
          <span className="grow text-left">joon lim</span>
          <Caret className="mt-2.5 mr-1.5 h-2 w-3 text-[#d0d4da]" />
        </button>
      </div>
      <nav aria-label="Toolbar" className="flex gap-32 pt-[13px] pl-[182px]">
        {toolbar.map((grp) => (
          <div key={grp[0].n} className="flex gap-[34px]">
            {grp.map((t) => (
              <button key={t.n} type="button" aria-label={t.n} title={t.n} className="h-8 w-8">
                <svg viewBox="0 0 32 32" className="block h-8 w-8 overflow-visible" aria-hidden="true">{t.g}</svg>
              </button>
            ))}
          </div>
        ))}
      </nav>
    </header>
  );
}

/* ---------- document area ---------- */

function FileTabs() {
  return (
    <div className="flex h-11 shrink-0 bg-[#3b4555]" role="tablist">
      <button type="button" aria-label="Start" className="flex w-12 items-center justify-center border-r-2 border-[#232931]">
        <svg viewBox="0 0 28 28" className="h-7 w-7" aria-hidden="true"><path d="M0 0H14V14H0z" fill={B} /><path d="M16 2H28V14H16zM2 16H14V28H2zM16 16H28V28H16z" fill={W} /></svg>
      </button>
      <button type="button" aria-label="New tab" className="flex w-[46px] items-center justify-center border-r-2 border-[#232931]">
        <svg viewBox="0 0 22 22" className="h-[22px] w-[22px]" stroke={W} strokeWidth="2"><path d="M11 0V22M0 11H22" /></svg>
      </button>
      <button type="button" role="tab" aria-selected="false" className="w-[391px] border-r-2 border-[#232931] pl-[6px] text-left text-[22px] leading-10 text-[#a1a7b0]">LISABO_Collection_Coffee_Table*</button>
      <button type="button" role="tab" aria-selected="true" className="w-[391px] border-r-2 border-[#232931] bg-[#4c586e] pl-[6px] text-left text-[22px] leading-10 text-[#f1f3f5]">IKEA-TOFTERY...offe_table-3D*</button>
    </div>
  );
}

function Leg({ x, top, foot }: { x: number; top: number; foot: number }) {
  return (
    <g>
      <rect x={x} y={top} width="21" height={foot - top} fill="url(#leg)" />
      <path d={`M${x - 6} ${foot - 3}Q${x + 10} ${foot - 9} ${x + 27} ${foot - 3}V${foot + 3}Q${x + 10} ${foot + 9} ${x - 6} ${foot + 3}z`} fill="#a4a6a2" />
      <path d={`M${x - 6} ${foot}Q${x + 10} ${foot + 6} ${x + 27} ${foot}`} fill="none" stroke="#d8dad8" strokeWidth="1" />
    </g>
  );
}

function Scene() {
  return (
    <svg viewBox="366 142 1716 1264" preserveAspectRatio="xMidYMid slice" className="absolute inset-0 h-full w-full" role="img" aria-label="Coffee table model">
      <defs>
        <linearGradient id="leg"><stop offset="0" stopColor="#a6a8a4" /><stop offset="0.45" stopColor="#a2a4a0" /><stop offset="0.6" stopColor="#c4c6c3" /><stop offset="0.82" stopColor="#e8eae8" /><stop offset="1" stopColor="#a8aaa8" /></linearGradient>
        <linearGradient id="zb"><stop offset="0" stopColor="#2c5ba6" /><stop offset="0.6" stopColor="#4a7fd0" /><stop offset="0.8" stopColor="#8fb0e6" /><stop offset="1" stopColor="#2c5ba6" /></linearGradient>
        <linearGradient id="yb" x1="0" y1="0" x2="0" y2="1"><stop offset="0" stopColor="#2c6a2c" /><stop offset="0.5" stopColor="#6cb46c" /><stop offset="1" stopColor="#2f7a2f" /></linearGradient>
        <linearGradient id="xb" x1="0" y1="0" x2="0" y2="1"><stop offset="0" stopColor="#d05a5a" /><stop offset="0.6" stopColor="#b84646" /><stop offset="1" stopColor="#7e2a2a" /></linearGradient>
      </defs>
      <Leg x={690} top={615} foot={767} />
      <Leg x={1779} top={660} foot={818} />
      <Leg x={1147} top={800} foot={960} />
      <path d="M627 487L1340 327L1860 547L1147 708z" fill="#959795" />
      <path d="M627 487L1147 708V723L887 613V687L1147 797V813L627 592z" fill="#a1a39f" />
      <path d="M887 613L999 661L887 687z" fill="#d9dbda" />
      <path d="M887 687L999 661L1147 723L1389 669L1504 717L1147 797z" fill="#959795" />
      <path d="M1389 669L1504 644V717z" fill="#a0a29e" />
      <path d="M1147 708L1860 547V653L1147 813V797L1504 717V644L1147 723z" fill="#d9dbda" />
      <g fill="none" stroke="#dfe1df" strokeWidth="1">
        <path d="M627 592V487L1340 327M627 487L1147 708M634 580V508L887 614M887 613V687L1147 797M1389 669L1504 717M887 687L999 661" />
        <path d="M634 580L887 687M999 661L1147 723M1147 797L1504 717" stroke="#7b7d7a" strokeDasharray="3 2" />
        <path d="M1147 708L1860 547" stroke="#c2c4c2" />
      </g>
      <path d="M1284 684V592L1289 586L1295 592V684z" fill="url(#zb)" />
      <path d="M1285 559H1309L1286 583H1309" fill="none" stroke="#2f74e6" strokeWidth="1" />
      <rect x="1292" y="675" width="78" height="13" rx="3" fill="url(#yb)" transform="rotate(-13 1292 682)" />
      <path d="M1362 632L1374 644L1386 632M1374 644V656" fill="none" stroke="#2bb02b" strokeWidth="1" />
      <rect x="1287" y="675" width="66" height="13" rx="4" fill="url(#xb)" transform="rotate(24 1290 682)" />
      <path d="M1341 675L1365 699M1365 675L1341 699" fill="none" stroke="#e03a3a" strokeWidth="1" />
      <g fill="none" strokeWidth="1">
        <path d="M639.5 1258V1392" stroke="#8f8cf6" />
        <path d="M602 1356L716 1332" stroke="#7df07d" />
        <path d="M612 1338L696 1370" stroke="#f07c7c" />
        <rect x="633.5" y="1341.5" width="12" height="12" fill="#21272f" stroke="#fff" />
      </g>
    </svg>
  );
}

function ViewCube() {
  return (
    <svg viewBox="60 90 720 480" className="h-40 w-60" role="img" aria-label="View cube">
      <defs>
        <linearGradient id="fc" x1="0" y1="0" x2="0" y2="1"><stop offset="0" stopColor="#b6b8ba" /><stop offset="1" stopColor="#8f9193" /></linearGradient>
        <radialGradient id="sh"><stop offset="0" stopColor="#3a4048" /><stop offset="1" stopColor="#21272f" stopOpacity="0" /></radialGradient>
      </defs>
      <path fillRule="evenodd" fill="#474d56" d="M70 424A350 139 0 0 1 770 424A350 139 0 0 1 70 424zM157 414A262 103 0 0 0 681 414A262 103 0 0 0 157 414z" />
      <ellipse cx="430" cy="410" rx="200" ry="70" fill="url(#sh)" />
      <g fill="#bcbec0" fontFamily="Noto Sans, sans-serif" fontSize="124" fontWeight="700" textAnchor="middle">
        <text transform="translate(650 338) scale(1 .4) rotate(49)" y="44">N</text>
        <text transform="translate(635 513) scale(1 .4) rotate(49)" y="44">E</text>
        <text transform="translate(137 480) scale(1 .4) rotate(49)" y="44">S</text>
        <text transform="translate(250 316) scale(1 .4) rotate(49)" y="44" fontSize="96">W</text>
      </g>
      <path d="M245 134L445 101L600 149L389 189z" fill="#aeb0b2" />
      <path d="M245 134L389 189L390 450L251 373z" fill="url(#fc)" />
      <path d="M389 189L600 149L597 390L390 450z" fill="url(#fc)" />
      <path d="M360 180L389 172L432 181V230L396 239L360 230z" fill="#9aa4b4" opacity=".7" />
      <path d="M245 134L389 189L600 149M389 189L390 450" fill="none" stroke="#4c4f53" strokeWidth="3" strokeDasharray="14 3" />
      <path d="M245 134L445 101L600 149L597 390L390 450L251 373z" fill="none" stroke="#77797c" strokeWidth="3" />
      <g fill="#4a5059" fontFamily="Noto Sans, sans-serif" fontWeight="700" fontSize="72" textAnchor="middle">
        <text transform="matrix(.42 .18 0 1 318 313)">FRONT</text>
        <text transform="matrix(.58 -.13 0 1 499 324)">RIGHT</text>
        <text transform="matrix(.4 .1 -.5 .3 420 152)">TOP</text>
      </g>
    </svg>
  );
}

function Viewport() {
  return (
    <main className="relative min-h-0 grow overflow-hidden bg-[#21272f] font-['Noto_Sans',sans-serif]">
      <Scene />
      <div className="absolute top-[11px] left-[30px] flex h-[26px] items-center text-[23px] leading-[26px] font-semibold text-[#9a9a9a]">
        <button type="button" aria-label="Viewport controls" className="mr-[25px] pt-1">
          <svg viewBox="0 0 13 13" className="h-[13px] w-[13px]" stroke="#9a9a9a" strokeWidth="2"><path d="M6 0V13M0 6H13" /></svg>
        </button>
        <button type="button" className="border-l-2 border-[#8a8a8a] pr-[15px] pl-[11px]">Custom View</button>
        <button type="button" className="border-l-2 border-[#8a8a8a] pl-[11px]">Shaded</button>
      </div>
      <div className="absolute top-[89px] right-[22px] flex w-60 flex-col items-center gap-[54px]">
        <ViewCube />
        <button type="button" className={`flex h-6 w-[102px] items-center justify-between rounded-lg bg-[#66737a] pr-2.5 pl-2 text-[23px] leading-6 text-[#1d2229] ${sans}`}>
          WCS
          <svg viewBox="0 0 18 12" className="h-3 w-[18px]" aria-hidden="true"><path d="M1 1H17L9 10z" fill="#8fa9b3" stroke="#1d2229" strokeWidth="1.5" /></svg>
        </button>
      </div>
    </main>
  );
}

/* ---------- properties ---------- */

type Prop = { id: string; label: string; kind: "select" | "input" | "off" | "transparency" | "height"; value: string; pre?: "swatch" | "line" };
const props: Prop[] = [
  { id: "color", label: "Color", kind: "select", value: "ByLayer", pre: "swatch" },
  { id: "layer", label: "Layer", kind: "select", value: "IKE120011-T2" },
  { id: "linetype", label: "Linetype", kind: "select", value: "ByLa...", pre: "line" },
  { id: "ltscale", label: "Linetype scale", kind: "input", value: "1.0000" },
  { id: "lineweight", label: "Lineweight", kind: "select", value: "ByLayer" },
  { id: "transparency", label: "Transparency", kind: "transparency", value: "0" },
  { id: "textstyle", label: "Text style", kind: "select", value: "Standard" },
  { id: "dimstyle", label: "Dimension st...", kind: "select", value: "Standard" },
  { id: "mlstyle", label: "Multileader st...", kind: "select", value: "Standard" },
  { id: "tablestyle", label: "Table style", kind: "select", value: "Standard" },
  { id: "annoscale", label: "Annotation sc...", kind: "select", value: "1'-0\" = 1'-0\"" },
  { id: "textheight", label: "Text height", kind: "height", value: "0.2000" },
  { id: "plotstyle", label: "Plot style", kind: "select", value: "ByColor" },
  { id: "plottable", label: "Plot style table", kind: "select", value: "None" },
  { id: "plotattached", label: "Plot style atta...", kind: "off", value: "Model" },
  { id: "plottype", label: "Plot table type", kind: "off", value: "Not available" },
];

const field = "h-[38px] rounded-[4px] border-2 border-[#2c3a3f] bg-[#4f5a6e] text-[21px] text-[#f5f6f8]";

function Field({ p }: { p: Prop }) {
  if (p.kind === "select")
    return (
      <div className="relative w-[217px]">
        <select id={p.id} defaultValue={p.value} className={`${field} block w-full appearance-none ${p.pre === "swatch" ? "pl-14" : p.pre === "line" ? "pl-[106px]" : "pl-3"} font-medium`}>
          <option>{p.value}</option>
        </select>
        {p.pre === "swatch" && <span className="pointer-events-none absolute top-2.5 left-5 h-[18px] w-[18px] border-2 border-black bg-white" />}
        {p.pre === "line" && <span className="pointer-events-none absolute top-[18px] left-4 h-0.5 w-16 bg-[#f5f6f8]" />}
        <Caret className="pointer-events-none absolute top-3.5 right-[9px] h-2 w-3 text-[#cfd2d6]" />
      </div>
    );
  if (p.kind === "transparency")
    return (
      <div className="flex w-[217px] items-center justify-end gap-1.5">
        <div className="relative w-[126px]">
          <input id={p.id} defaultValue={p.value} className="block h-[34px] w-full border-2 border-[#2c3a3f] bg-[#4f5a6e] pr-1.5 text-right text-[21px] font-medium text-[#f5f6f8]" />
          <span className="absolute top-[3px] left-0 h-7 w-[3px] border-y-6 border-[#5a9cf5]" />
          <span className="absolute right-[65px] bottom-1 h-3 w-px bg-[#8f949c]" />
        </div>
        <button type="button" aria-label="Transparency by layer" className={`${field} flex w-[78px] items-center justify-between pr-2 pl-3.5`}>
          <svg viewBox="0 0 25 22" className="h-[22px] w-[25px]" aria-hidden="true"><path d="M8 0H25L17 9H0z" fill={BF} /><path d="M2 13L16 13L23 6L25 7L17 15H0zM2 19L16 19L23 12L25 13L17 21H0z" fill={W} /></svg>
          <Caret className="h-2 w-3 text-[#cfd2d6]" />
        </button>
      </div>
    );
  if (p.kind === "height")
    return (
      <div className="flex w-[217px] items-center gap-1">
        <input id={p.id} defaultValue={p.value} className={`${field} w-[172px] pt-0.5 pl-1.5 font-medium`} />
        <button type="button" aria-label="Pick height" className="h-9 w-10 rounded-[4px] border-2 border-[#2c3a3f]">
          <svg viewBox="0 0 36 32" className="block h-8 w-9" fill="none" stroke={W} strokeWidth="2" aria-hidden="true"><path d="M3 0V28M31 0V12" /><path d="M9 5H25" stroke={B} /><path d="M6 5L11 1V9zM28 5L23 1V9z" fill={B} stroke="none" /><path d="M25 14V32M16 23H34" /><rect x="21" y="19" width="8" height="8" /></svg>
        </button>
      </div>
    );
  const off = p.kind === "off";
  return (
    <input
      id={p.id}
      defaultValue={p.value}
      disabled={off}
      className={off ? "h-[38px] w-[217px] rounded-[4px] border-2 border-[#38424c] bg-[#404b5d] pt-0.5 pl-1.5 text-[22px] text-[#808893]" : `${field} w-[217px] pt-0.5 pl-1.5 font-medium`}
    />
  );
}

function PropertiesPanel() {
  const tab = "flex w-[105px] items-center justify-center border-r-2 border-b-2 border-[#232931] bg-[#2f3542]";
  return (
    <aside className="flex w-[474px] shrink-0 flex-col border-l-2 border-[#232931] bg-[#3a4454]" aria-label="Properties panel">
      <div className="flex h-[46px] shrink-0" role="tablist">
        <button type="button" role="tab" aria-selected="true" aria-label="Properties" className="flex w-[105px] items-center justify-center border-r-2 border-[#232931]">
          <svg viewBox="0 0 32 28" className="h-7 w-8" aria-hidden="true"><path d="M11 0H27L18 10H2z" fill={W} /><path d="M2 13H17L24 5H26L19 16H0zM2 19H17L24 11V14L17 22H0z" fill={W} /><circle cx="24" cy="21" r="8.5" fill="#3a4454" /><circle cx="24" cy="21" r="7" fill={W} /><path d="M23 20H25V25H23zM23 16H25V18H23z" fill="#3a4454" /></svg>
        </button>
        <button type="button" role="tab" aria-label="References" className={tab}>
          <svg viewBox="0 0 31 28" className="h-7 w-[31px]" aria-hidden="true"><path d="M0 6H22V14H31V28H0z" fill={W} /><path d="M24 6L31 12H24z" fill="#f5f5f5" /><path d="M0 0H12V19H0z" fill="#2f3542" /><path d="M5 6V13A2 2 0 0 0 9 13V5A4 4 0 0 0 1 5V14A4 4 0 0 0 9 17" stroke={W} strokeWidth="2" fill="none" /></svg>
        </button>
        <button type="button" role="tab" aria-label="Palettes" className={`${tab} relative`}>
          <svg viewBox="0 0 28 26" className="h-[26px] w-7" aria-hidden="true"><path d="M0 0H28V26H0z" fill={W} /><path d="M0 0H28V6H0z" fill="#a6a8ac" /><path d="M3 2H5V4H3zM5 9H9V13H5zM12 9H16V13H12zM19 9H23V13H19zM5 16H9V20H5zM12 16H16V20H12zM19 16H23V20H19zM3 23H25V24H3z" fill="#4a5058" /></svg>
          <span className="absolute -top-0.5 right-[26px] h-5 w-5 rounded-full border-2 border-white bg-[#f97038]" />
        </button>
        <div className="grow border-b-2 border-[#232931] bg-[#2f3542]" />
        <button type="button" aria-label="Collapse panel" className="flex w-[49px] items-center justify-center border-b-2 border-l-2 border-[#232931]">
          <svg viewBox="0 0 14 12" className="h-3 w-3.5" fill="none" stroke="#a3a9b2" strokeWidth="1.5"><path d="M2 1L6 6L2 11M8 1L12 6L8 11" /></svg>
        </button>
      </div>
      <div className="flex h-8 items-center pr-5 pl-5">
        <h2 className="grow text-[24px] leading-8 font-medium text-[#e4e6e9]">Properties</h2>
        <div className="flex h-7 w-[120px] border-2 border-[#2a303b] text-[17px] leading-6">
          <button type="button" className="w-[56px] border-r-2 border-[#2a303b] text-[#7e8691]">All</button>
          <button type="button" className="grow bg-[#4c586c] text-[#f0f2f4]">My</button>
        </div>
        <button type="button" aria-label="Edit properties" className="ml-5">
          <svg viewBox="0 0 28 28" className="h-7 w-7" aria-hidden="true"><path d="M10 23H1V1H20V9" fill="none" stroke={W} strokeWidth="2" /><path d="M0 0H21V4H0z" fill={W} /><path d="M4 8H16M4 12H16M4 16H12" stroke={W} strokeWidth="2" /><path d="M12 27V22L21 13L26 18L17 27z" fill={W} /><path d="M23 11L28 16" stroke={W} strokeWidth="3" /></svg>
        </button>
        <button type="button" aria-label="Close properties" className="ml-[22px]">
          <svg viewBox="0 0 22 28" className="h-7 w-[22px]" aria-hidden="true"><path d="M9 7V2H20V26H9V21" fill="none" stroke={W} strokeWidth="3" /><path d="M4 14H13" stroke={W} strokeWidth="2" /><path d="M0 14L6 9V19z" fill={W} /></svg>
        </button>
      </div>
      <div className="relative mt-4 ml-[22px] w-[428px]">
        <select aria-label="Space" disabled className="block h-11 w-full appearance-none rounded-[4px] border-2 border-[#37424f] bg-[#404b5d] pl-3 text-[22px] text-[#808893] opacity-100">
          <option>Model Space</option>
        </select>
        <Caret className="pointer-events-none absolute top-[18px] right-2.5 h-2 w-3 text-[#7c838e]" />
      </div>
      <div className="mt-3.5 flex flex-col gap-2 pl-[63px]">
        {props.map((p) => (
          <div key={p.id} className="flex h-[38px] items-center">
            <div className="w-[165px] shrink-0">
              <label htmlFor={p.id} className="block w-max min-w-[147px] text-right text-[22px] leading-7 whitespace-nowrap text-[#c9ccd1]">{p.label}</label>
            </div>
            <Field p={p} />
          </div>
        ))}
      </div>
    </aside>
  );
}

/* ---------- status bar ---------- */

const Anno = ({ c = W }: { c?: string }) => <path d="M17 4C18 12 20 15 22 20C24 26 28 30 30 34L22 34L18 28H16L12 34H4C6 30 10 26 12 20C14 15 16 12 17 4zM17 21L15 26H19z" fill={c} fillRule="evenodd" stroke="none" />;
const status: { n: string; on?: boolean; g: ReactNode }[] = [
  { n: "Grid", g: <path d="M12 4V34M20 4V34M28 4V34M5 11H35M5 19H35M5 27H35" /> },
  { n: "Snap", g: <path d="M8 8H12M18 8H22M28 8H32M8 19H12M18 19H22M28 19H32M8 30H12M18 30H22M28 30H32" strokeWidth="4" /> },
  { n: "Ortho", g: <path d="M5 3V34H36M5 24H16V34" /> },
  { n: "Polar", on: true, g: <><circle cx="17" cy="19" r="13" /><path d="M17 19L32 5M17 20H36" /></> },
  { n: "Dynamic input", on: true, g: <><path d="M4 13H18M11 6V20" /><path d="M17 23H35V31H17z" fill="#fff" stroke="none" /><path d="M19 25V29" stroke="#5f90c2" /></> },
  { n: "Lineweight", g: <><path d="M5 7H36M5 14H20M5 25H20" /><path d="M5 16H20M20 14H36" strokeWidth="3" /><path d="M5 30H20" strokeWidth="7" /><path d="M20 25H36" strokeWidth="3" /></> },
  { n: "Transparency", on: true, g: <><rect x="6" y="6" width="27" height="27" /><path d="M10 11H30M10 19H30M10 27H30" strokeWidth="4" strokeDasharray="4 4" /><path d="M14 15H30M14 23H30" strokeWidth="4" strokeDasharray="4 4" /></> },
  { n: "Selection cycling", on: true, g: <><path d="M11 4H6V32H11M22 4H27V16" /><rect x="12" y="8" width="9" height="7" /><circle cx="16" cy="22" r="4" /><path d="M24 16V33L28 29L32 36L34 34L31 27H36z" fill="#fff" stroke="none" /></> },
  { n: "Object snap tracking", on: true, g: <><path d="M5 34L31 5M5 34H35" /><rect x="16" y="17" width="5" height="5" fill="#fff" stroke="none" /></> },
  { n: "Object snap", on: true, g: <><rect x="4" y="4" width="8" height="8" /><path d="M12 8H36V34H8V12" /></> },
  { n: "Annotation visibility", on: true, g: <><Anno c="#fff" /><circle cx="29" cy="11" r="6" fill="#fff" stroke="none" /></> },
  { n: "Auto scale", g: <><Anno /><path d="M30 2L22 14H27L25 22L36 11H31L34 3z" fill={Y} stroke="none" /></> },
  { n: "Annotation scale", g: <Anno /> },
];

function StatusBar() {
  return (
    <footer className="flex h-[42px] shrink-0 bg-[#3b4453]">
      <div className="flex font-['Noto_Sans',sans-serif] text-[21px] text-[#959ba4]" role="tablist">
        <button type="button" role="tab" aria-selected="true" className="w-[120px] border-r-2 border-[#232931] bg-[#4c586c] pr-1 pb-0.5 font-semibold text-[#f0f0f0]">Model</button>
        <button type="button" aria-label="New layout" className="flex w-[46px] items-center justify-center border-r-2 border-[#232931]">
          <svg viewBox="0 0 22 22" className="h-[22px] w-[22px]" stroke="#cfd2d6" strokeWidth="2"><path d="M11 0V22M0 11H22" /></svg>
        </button>
        <button type="button" role="tab" className="relative w-[118px] border-r-2 border-[#232931] pr-1 pb-0.5">
          Layout1
          <span className="absolute -top-0.5 -right-0.5 z-10 h-5 w-5 rounded-full border-2 border-white bg-[#f97038]" />
        </button>
        <button type="button" role="tab" className="w-[118px] border-r-2 border-[#232931] pr-1 pb-0.5">Layout2</button>
      </div>
      <div className="grow" />
      <div className="flex w-[365px] items-center gap-3.5 border-l-2 border-[#232931] pl-[22px] text-[22px] whitespace-nowrap text-[#c3c6ca]">
        <span>1455.8165,</span>
        <span>-1923.6015, 0.0000</span>
      </div>
      <div className="flex gap-1 pt-0.5">
        {status.map((s) => (
          <button key={s.n} type="button" aria-label={s.n} title={s.n} className={`h-10 w-10 ${s.on ? "bg-[#5f90c2]" : ""}`}>
            <svg viewBox="0 0 40 40" className="block h-10 w-10" fill="none" stroke={s.on ? "#fff" : W} strokeWidth="2" aria-hidden="true">{s.g}</svg>
          </button>
        ))}
      </div>
      <button type="button" className="flex items-center gap-2 text-[22px] whitespace-nowrap text-[#c3c6ca]">
        1'-0" = 1'-0"
        <Caret className="h-2 w-3" />
      </button>
      <button type="button" aria-label="Isolate objects" className="ml-[17px]">
        <svg viewBox="0 0 34 34" className="h-[34px] w-[34px]" fill="none" stroke={W} strokeWidth="2" aria-hidden="true"><rect x="1" y="2" width="13" height="13" /><circle cx="26" cy="15" r="6" /><path d="M13 21L20 33H6z" /></svg>
      </button>
      <button type="button" aria-label="Customize status bar" className="mr-[15px] ml-3 text-[#d9d9d9]"><Gear className="h-[30px] w-[30px]" /></button>
    </footer>
  );
}

export default function App() {
  return (
    <div className="flex h-screen flex-col overflow-hidden bg-[#21272f] font-['Inter',sans-serif]">
      <TopBar />
      <div className="flex min-h-0 grow">
        <ToolPalette />
        <div className="flex min-w-0 grow flex-col">
          <div className="flex min-h-0 grow">
            <div className="flex min-w-0 grow flex-col">
              <FileTabs />
              <Viewport />
            </div>
            <div className="flex border-b-2 border-[#232931]">
              <PropertiesPanel />
            </div>
          </div>
          <StatusBar />
        </div>
      </div>
    </div>
  );
}
